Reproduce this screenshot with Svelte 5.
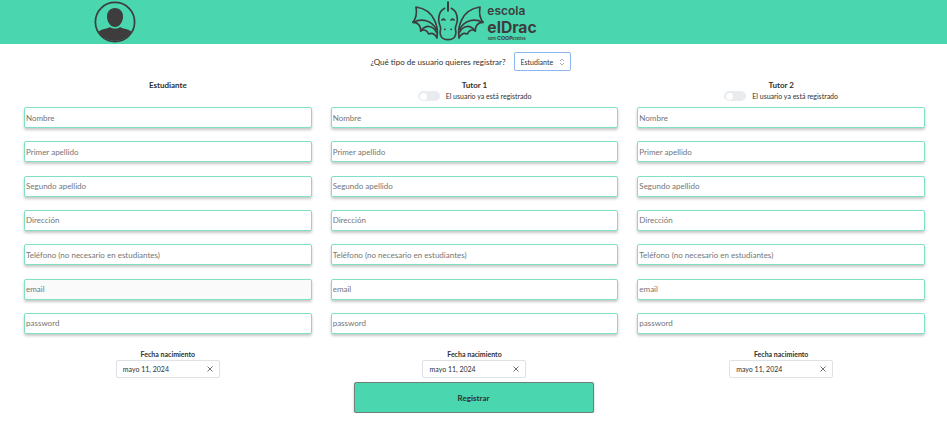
<script>
  const fields = [
    { name: 'nombre', label: 'Nombre', type: 'text' },
    { name: 'apellido1', label: 'Primer apellido', type: 'text' },
    { name: 'apellido2', label: 'Segundo apellido', type: 'text' },
    { name: 'direccion', label: 'Dirección', type: 'text' },
    { name: 'telefono', label: 'Teléfono (no necesario en estudiantes)', type: 'tel' },
    { name: 'email', label: 'email', type: 'email' },
    { name: 'password', label: 'password', type: 'password' }
  ];

  let people = $state([
    { id: 'estudiante', title: 'Estudiante', tutor: false, registered: false, date: 'mayo 11, 2024' },
    { id: 'tutor1', title: 'Tutor 1', tutor: true, registered: false, date: 'mayo 11, 2024' },
    { id: 'tutor2', title: 'Tutor 2', tutor: true, registered: false, date: 'mayo 11, 2024' }
  ]);

  let kind = $state('Estudiante');
</script>

{#snippet wing()}
  <path d="M150 114C147 92 150 76 157 62 166 40 187 25 213 21 210 38 212 54 222 67 207 67 199 76 199 93 189 87 180 90 175 102 165 98 156 102 150 114" />
  <path d="M152 88C166 60 196 54 222 67M151 98C164 74 184 74 199 93" />
{/snippet}

<div class="page">
  <header>
    <a class="profile" href="#perfil" aria-label="Perfil">
      <svg viewBox="0 0 42 42" width="42" height="42">
        <defs><clipPath id="disc"><circle cx="21" cy="21" r="19" /></clipPath></defs>
        <circle cx="21" cy="21" r="19.6" fill="none" stroke="#3d3d3d" stroke-width="1.7" />
        <g clip-path="url(#disc)" fill="#3d3d3d">
          <path d="M21 7c-5 0-8 3.600-8 8.500 0 5.500 3.500 10.500 8 10.500s8-5 8-10.500c0-4.900-3-8.500-8-8.500z" />
          <path d="M16 26c2 2 8 2 10 0 3 2 10 2 13 6v10H3V32c3-4 10-4 13-6z" />
        </g>
      </svg>
    </a>
    <a class="brand" href="#inicio" aria-label="Escola elDrac">
      <svg viewBox="0 0 390 132" width="130" height="44">
        <g fill="none" stroke="#3d3d3d" stroke-width="5" stroke-linejoin="round" stroke-linecap="round">
          {@render wing()}
          <g transform="translate(234 0) scale(-1 1)">{@render wing()}</g>
          <path d="M107 25C94 31 89 45 89 60 89 72 95 77 95 86 90 106 97 119 117 119 137 119 144 106 139 86 139 77 145 72 145 60 145 45 140 31 127 25" />
          <path d="M117 7V32" stroke-width="6" />
          <path d="M99 60Q103 55 108 60M126 60Q131 55 135 60M107 88H108M126 88H127" />
        </g>
        <g fill="#3d3d3d" font-family="Inter, sans-serif">
          <text x="235" y="45" font-size="36" font-weight="600">escola</text>
          <text x="235" y="98" font-size="47" font-weight="700">elDrac</text>
          <text x="236" y="119" font-size="12" font-weight="600">som</text>
          <text x="264" y="121" font-size="16" font-weight="700">COOP</text>
          <text x="310" y="119" font-size="12" font-weight="600">erativa</text>
        </g>
      </svg>
    </a>
  </header>

  <form onsubmit={(e) => e.preventDefault()}>
    <div class="kind">
      <label for="kind">¿Qué tipo de usuario quieres registrar?</label>
      <span class="select">
        <select id="kind" bind:value={kind}>
          <option>Estudiante</option>
          <option>Profesor</option>
        </select>
        <svg viewBox="0 0 8 8" width="8" height="8" aria-hidden="true">
          <path d="M2 3 4 1 6 3M2 5 4 7 6 5" fill="none" stroke="#868e96" stroke-width="0.7" />
        </svg>
      </span>
    </div>

    <div class="columns">
      {#each people as person (person.id)}
        <section>
          <div class="heading">
            <h2>{person.title}</h2>
            {#if person.tutor}
              <label class="switch">
                <input type="checkbox" role="switch" bind:checked={person.registered} />
                <span>El usuario ya está registrado</span>
              </label>
            {/if}
          </div>
          <div class="fields">
            {#each fields as field (field.name)}
              <input
                class="field"
                class:active={person.id === 'estudiante' && field.name === 'email'}
                type={field.type}
                name="{person.id}-{field.name}"
                placeholder={field.label}
                aria-label={field.label}
              />
            {/each}
          </div>
          <div class="birth">
            <label for="{person.id}-fecha">Fecha nacimiento</label>
            <div class="date">
              <input id="{person.id}-fecha" type="text" bind:value={person.date} />
              <button type="button" aria-label="Borrar fecha" onclick={() => (person.date = '')}>
                <svg viewBox="0 0 8 8" width="8" height="8">
                  <path d="M1.500 1.500 6.500 6.500M6.500 1.500 1.500 6.500" fill="none" stroke="#495057" stroke-width="0.800" />
                </svg>
              </button>
            </div>
          </div>
        </section>
      {/each}
    </div>

    <button class="submit" type="submit">Registrar</button>
  </form>
</div>

<style>
  :global(body) {
    margin: 0;
    background: #fff;
  }
  .page,
  .page input,
  .page select,
  .page button {
    box-sizing: border-box;
    font-family: Lato, 'Noto Sans', sans-serif;
    color: #303030;
  }
  header {
    display: grid;
    grid-template-columns: 1fr auto 1fr;
    align-items: center;
    height: 44px;
    background: #4ad7af;
  }
  header a,
  header svg {
    display: block;
  }
  .profile {
    width: 42px;
    margin-left: 94px;
  }
  .kind {
    display: flex;
    justify-content: center;
    align-items: center;
    gap: 8px;
    padding: 8px 6px 0 0;
    font-size: 8px;
    line-height: 12px;
  }
  .select {
    position: relative;
    display: block;
  }
  .select select {
    display: block;
    width: 57px;
    height: 19px;
    padding: 0 6px;
    appearance: none;
    border: 1px solid #8db5f0;
    border-radius: 2px;
    background: #fff;
    font-size: 7px;
    outline: none;
  }
  .select svg {
    position: absolute;
    right: 5px;
    top: 6px;
    pointer-events: none;
  }
  .columns {
    display: grid;
    grid-template-columns: repeat(3, 1fr);
    gap: 19px;
    padding: 8px 22px 0 24px;
  }
  .heading {
    display: flex;
    flex-direction: column;
    align-items: center;
    height: 28px;
  }
  h2 {
    margin: 0;
    font-size: 8px;
    line-height: 12px;
    font-weight: 700;
  }
  .switch {
    display: flex;
    align-items: center;
    gap: 6px;
    font-size: 7px;
    line-height: 10px;
  }
  .switch input {
    display: flex;
    align-items: center;
    width: 22px;
    height: 10px;
    margin: 0;
    padding: 0 2px;
    appearance: none;
    border-radius: 5px;
    background: #e9ecef;
  }
  .switch input::before {
    content: '';
    width: 7px;
    height: 7px;
    border-radius: 50%;
    background: #fff;
  }
  .switch input:checked {
    justify-content: flex-end;
    background: #4ad7af;
  }
  .fields {
    display: flex;
    flex-direction: column;
    justify-content: space-between;
    height: 227px;
  }
  .page .field {
    width: 100%;
    height: 21px;
    padding: 0 1px;
    border: 1px solid #7fe0c5;
    border-radius: 2px;
    background: #fff;
    box-shadow: 0 2px 3px rgb(0 0 0 / 22%);
    font-size: 8px;
  }
  .page .field.active {
    background: #fafafa;
  }
  .field::placeholder {
    color: #757575;
    opacity: 1;
  }
  .birth {
    display: flex;
    flex-direction: column;
    align-items: center;
    padding-top: 15px;
    font-size: 7px;
    line-height: 11px;
    font-weight: 700;
  }
  .date {
    display: flex;
    align-items: center;
    width: 104px;
    height: 18px;
    box-sizing: border-box;
    padding: 0 5px 0 6px;
    border: 1px solid #dee2e6;
    border-radius: 2px;
  }
  .date input {
    flex: 1;
    min-width: 0;
    padding: 0;
    border: 0;
    background: none;
    font-size: 7px;
    outline: none;
  }
  .date button {
    padding: 0;
    border: 0;
    background: none;
  }
  .date svg {
    display: block;
  }
  .submit {
    display: block;
    width: 240px;
    height: 31px;
    margin: 4px auto 0;
    border: 1px solid #6f7f7a;
    border-radius: 2px;
    background: #4ad7af;
    box-shadow: 0 2px 3px rgb(0 0 0 / 22%);
    font-size: 8px;
    font-weight: 700;
  }
</style>
